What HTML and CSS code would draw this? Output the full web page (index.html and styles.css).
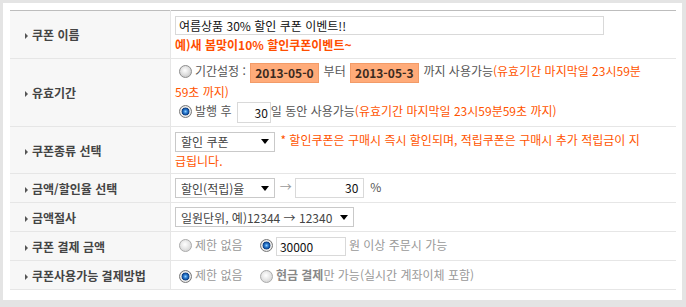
FILE: index.html
```html
<!DOCTYPE html>
<html lang="ko">
<head>
    <meta charset="UTF-8">
    <meta name="viewport" content="width=device-width, initial-scale=1.0">
    <title>쿠폰 등록</title>
    <link rel="stylesheet" href="styles.css">
</head>
<body>
    <div class="panel">
        <table class="form-table">
            <tr class="row-name">
                <th><span class="bullet"></span>쿠폰 이름</th>
                <td>
                    <div class="text-box wide">여름상품 30% 할인 쿠폰 이벤트!!</div>
                    <div class="example">예)새 봄맞이10% 할인쿠폰이벤트~</div>
                </td>
            </tr>
            <tr class="row-period">
                <th><span class="bullet"></span>유효기간</th>
                <td>
                    <div class="line first">
                        <span class="radio"></span>기간설정 : <span class="date">2013-05-0</span> 부터 <span class="date">2013-05-3</span> 까지 사용가능<span class="note">(유효기간 마지막일 23시59분<br>59초 까지)</span>
                    </div>
                    <div class="line second">
                        <span class="radio checked"></span>발행 후 <span class="num-box days">30</span>일 동안 사용가능<span class="note">(유효기간 마지막일 23시59분59초 까지)</span>
                    </div>
                </td>
            </tr>
            <tr class="row-type">
                <th><span class="bullet"></span>쿠폰종류 선택</th>
                <td>
                    <span class="select type">할인 쿠폰<i class="caret"></i></span>
                    <span class="note star">* 할인쿠폰은 구매시 즉시 할인되며, 적립쿠폰은 구매시 추가 적립금이 지<br>급됩니다.</span>
                </td>
            </tr>
            <tr class="row-short">
                <th><span class="bullet"></span>금액/할인율 선택</th>
                <td>
                    <span class="select type">할인(적립)율<i class="caret"></i></span>
                    <span class="arrow">→</span>
                    <span class="num-box rate">30</span>
                    <span class="unit">%</span>
                </td>
            </tr>
            <tr class="row-short">
                <th><span class="bullet"></span>금액절사</th>
                <td>
                    <span class="select cut">일원단위, 예)12344 → 12340<i class="caret"></i></span>
                </td>
            </tr>
            <tr class="row-short muted">
                <th><span class="bullet"></span>쿠폰 결제 금액</th>
                <td>
                    <span class="radio disabled"></span>제한 없음
                    <span class="radio checked gap"></span><span class="text-box amount">30000</span>원 이상 주문시 가능
                </td>
            </tr>
            <tr class="row-short muted">
                <th><span class="bullet"></span>쿠폰사용가능 결제방법</th>
                <td>
                    <span class="radio checked"></span>제한 없음
                    <span class="radio disabled gap"></span><b>현금 결제</b>만 가능(실시간 계좌이체 포함)
                </td>
            </tr>
        </table>
    </div>
</body>
</html>
```

FILE: styles.css
```css
body {
    margin: 0;
    background-color: #e4e4e4;
    font-family: "Noto Sans CJK KR", "Noto Sans", sans-serif;
    font-size: 12px;
    line-height: 17px;
    color: #555;
}

.panel {
    background-color: white;
    margin: 3px 4px 0 3px;
    padding: 7px 6px 3px 7px;
    height: 287px;
}

.form-table {
    width: 666px;
    border-collapse: collapse;
    border-top: 1px solid #bdbdbd;
    border-bottom: 1px solid #b9b9b9;
}

.form-table th {
    width: 145px;
    padding: 0 0 0 15px;
    background-color: #f7f7f7;
    border-right: 1px solid #e6e6e6;
    border-bottom: 1px solid #e6e6e6;
    text-align: left;
    font-weight: bold;
    color: #444;
    white-space: nowrap;
}

.form-table td {
    padding: 0 4px;
    border-bottom: 1px solid #e6e6e6;
}

.row-name td { height: 47px; }
.row-period td { height: 67px; }
.row-type td { height: 46px; }
.row-short td { height: 28px; }

.bullet {
    display: inline-block;
    width: 0;
    height: 0;
    border-top: 3px solid transparent;
    border-bottom: 3px solid transparent;
    border-left: 3px solid #555;
    margin-right: 4px;
    vertical-align: 1px;
}

.text-box {
    display: inline-block;
    box-sizing: border-box;
    height: 19px;
    border: 1px solid #d9d9d9;
    background-color: white;
    color: #111;
    line-height: 17px;
    padding-left: 3px;
    vertical-align: middle;
}

.text-box.wide {
    display: block;
    width: 429px;
    margin-bottom: 1px;
}

.example {
    color: #ff4e00;
    font-weight: bold;
}

.note {
    color: #ff5400;
}

.line.second {
    margin-top: 2px;
}

.date {
    display: inline-block;
    box-sizing: border-box;
    width: 69px;
    height: 20px;
    border: 1px solid #f29b68;
    background-color: #ffab79;
    color: #3a2a20;
    font-weight: bold;
    line-height: 18px;
    padding-left: 4px;
    vertical-align: middle;
    margin: 0 1px;
}

.num-box {
    display: inline-block;
    box-sizing: border-box;
    height: 21px;
    border: 1px solid #d9d9d9;
    color: #111;
    text-align: right;
    line-height: 19px;
    padding-right: 2px;
    vertical-align: middle;
}

.num-box.days {
    width: 34px;
    margin-left: 2px;
}

.num-box.rate {
    width: 69px;
    height: 20px;
    line-height: 18px;
    padding-right: 5px;
}

.text-box.amount {
    width: 70px;
    margin-right: 3px;
}

.radio {
    display: inline-block;
    box-sizing: border-box;
    width: 13px;
    height: 13px;
    margin: 0 3px 0 4px;
    border-radius: 50%;
    border: 1px solid #8f8f8f;
    background: radial-gradient(circle at 45% 40%, #ffffff 0, #e2e2e2 45%, #b8b8b8 100%);
    vertical-align: middle;
    position: relative;
    top: -1px;
}

.radio.checked {
    border-color: #7a7a7a;
    background: radial-gradient(circle at 50% 50%, #8fd0ff 0, #2b7bd0 1.8px, #0c3f86 3.6px, #d8d8d8 4.2px, #f4f4f4 4.8px, #c4c4c4 6px);
}

.radio.disabled {
    border-color: #ababab;
    background: radial-gradient(circle at 45% 40%, #ffffff 0, #e8e8e8 45%, #c8c8c8 100%);
}

.radio.gap {
    margin-left: 14px;
}

.select {
    display: inline-flex;
    align-items: center;
    justify-content: space-between;
    box-sizing: border-box;
    height: 20px;
    padding: 0 5px 0 5px;
    border: 1px solid #c9c9c9;
    background-color: white;
    color: #444;
    vertical-align: middle;
}

.select.type {
    width: 100px;
}

.select.cut {
    width: 179px;
}

.caret {
    width: 0;
    height: 0;
    border-left: 4px solid transparent;
    border-right: 4px solid transparent;
    border-top: 5px solid #000;
}

.star {
    margin-left: 2px;
}

.arrow {
    color: #999;
    margin: 0 1px 0 2px;
}

.unit {
    margin-left: 3px;
}

.muted td {
    color: #999;
}

.muted b {
    color: #888;
}
```
